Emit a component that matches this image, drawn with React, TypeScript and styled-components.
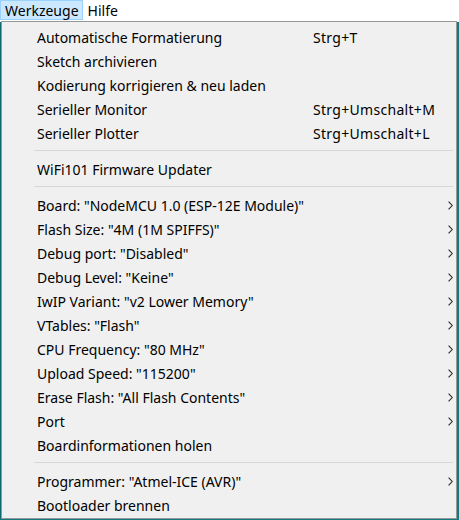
import styled, {createGlobalStyle} from "styled-components";

type Item = {
  label: string;
  shortcut?: string;
  sub?: boolean;
};

const groups: Item[][] = [
  [
    {label: "Automatische Formatierung", shortcut: "Strg+T"},
    {label: "Sketch archivieren"},
    {label: "Kodierung korrigieren & neu laden"},
    {label: "Serieller Monitor", shortcut: "Strg+Umschalt+M"},
    {label: "Serieller Plotter", shortcut: "Strg+Umschalt+L"},
  ],
  [{label: "WiFi101 Firmware Updater"}],
  [
    {label: 'Board: "NodeMCU 1.0 (ESP-12E Module)"', sub: true},
    {label: 'Flash Size: "4M (1M SPIFFS)"', sub: true},
    {label: 'Debug port: "Disabled"', sub: true},
    {label: 'Debug Level: "Keine"', sub: true},
    {label: 'IwIP Variant: "v2 Lower Memory"', sub: true},
    {label: 'VTables: "Flash"', sub: true},
    {label: 'CPU Frequency: "80 MHz"', sub: true},
    {label: 'Upload Speed: "115200"', sub: true},
    {label: 'Erase Flash: "All Flash Contents"', sub: true},
    {label: "Port", sub: true},
    {label: "Boardinformationen holen"},
  ],
  [
    {label: 'Programmer: "Atmel-ICE (AVR)"', sub: true},
    {label: "Bootloader brennen"},
  ],
];

function Chevron() {
  return (
    <svg width="5" height="9" viewBox="0 0 5 9">
      <polyline points="0.6,0.6 4.2,4.5 0.6,8.4" fill="none" stroke="#2b2b2b" strokeWidth="1.1" />
    </svg>
  );
}

export default function App() {
  return (
    <>
      <GlobalStyle />
      <Page>
        <MenuBar>
          <TopItem $open>Werkzeuge</TopItem>
          <TopItem>Hilfe</TopItem>
        </MenuBar>
        <Window />
        <Dropdown>
          {groups.map((group, gi) => (
            <div key={gi}>
              {gi > 0 && <Separator />}
              {group.map((item) => (
                <Row key={item.label}>
                  <Label>{item.label}</Label>
                  <Shortcut>{item.shortcut}</Shortcut>
                  <Arrow>{item.sub && <Chevron />}</Arrow>
                </Row>
              ))}
            </div>
          ))}
        </Dropdown>
      </Page>
    </>
  );
}

const GlobalStyle = createGlobalStyle`
  html, body {
    margin: 0;
    padding: 0;
    background: #ffffff;
  }
  body {
    font-family: "Noto Sans", "Open Sans", sans-serif;
    color: #000;
  }
`;

const Page = styled.div`
  position: relative;
  width: 459px;
  height: 520px;
  overflow: hidden;
  display: flex;
  flex-direction: column;
`;

const MenuBar = styled.div`
  height: 22px;
  display: flex;
  align-items: stretch;
  background: #ffffff;
  font-size: 14px;
`;

const TopItem = styled.div<{$open?: boolean}>`
  height: 20px;
  padding: 0 3px 0 4px;
  display: flex;
  align-items: center;
  box-sizing: border-box;
  border: 1px solid ${(p) => (p.$open ? "#99d1ff" : "transparent")};
  background: ${(p) => (p.$open ? "#cce8ff" : "transparent")};
`;

const Window = styled.div`
  flex: 1;
  background: #0f7b7f;
  border-left: 1px solid #0b6b6e;
`;

const Dropdown = styled.div`
  position: absolute;
  top: 21px;
  left: 1px;
  width: 456px;
  box-sizing: border-box;
  border: 1px solid #979797;
  background: #f0f0f0;
  padding: 3px 0 1px;
  font-size: 14px;
`;

const Row = styled.div`
  height: 24px;
  display: grid;
  grid-template-columns: 276px 1fr 8px;
  align-items: center;
  padding-left: 35px;
`;

const Label = styled.span`
  white-space: nowrap;
`;

const Shortcut = styled.span`
  white-space: nowrap;
  letter-spacing: 0.3px;
`;

const Arrow = styled.span`
  display: flex;
  align-items: center;
  height: 9px;
`;

const Separator = styled.div`
  height: 1px;
  margin: 5px 3px 6px 32px;
  background: #d7d7d7;
`;
